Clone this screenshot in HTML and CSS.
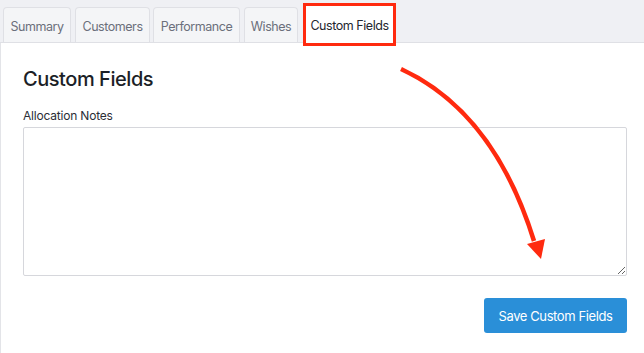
FILE: index.html
```html
<!DOCTYPE html>
<html lang="en">
<head>
    <meta charset="UTF-8">
    <meta name="viewport" content="width=device-width, initial-scale=1.0">
    <title>Custom Fields</title>
    <link rel="stylesheet" href="styles.css">
</head>
<body>
    <div class="tab-bar">
        <div class="tab tab-summary">Summary</div>
        <div class="tab tab-customers">Customers</div>
        <div class="tab tab-performance">Performance</div>
        <div class="tab tab-wishes">Wishes</div>
        <div class="tab active">Custom Fields</div>
    </div>

    <div class="panel">
        <h2>Custom Fields</h2>
        <label class="field-label" for="notes">Allocation Notes</label>
        <textarea id="notes" class="notes"></textarea>
        <div class="actions">
            <button class="save-btn">Save Custom Fields</button>
        </div>
    </div>

    <!-- annotation arrow -->
    <svg class="arrow" width="644" height="353" viewBox="0 0 644 353">
        <path d="M401 69 Q494 112 534 241" fill="none" stroke="#ff2a0f" stroke-width="4.5"/>
        <polygon points="527,244 545,239 541,259" fill="#ff2a0f"/>
    </svg>
</body>
</html>
```

FILE: styles.css
```css
body {
    margin: 0;
    background-color: white;
    font-family: Inter, "Noto Sans", sans-serif;
    color: #1f2430;
    position: relative;
    height: 353px;
    overflow: hidden;
}

.tab-bar {
    display: flex;
    align-items: flex-end;
    gap: 4px;
    height: 43px;
    padding-left: 3px;
    background-color: #eff0f4;
    border-bottom: 1px solid #dfe0e5;
    box-sizing: border-box;
}

.tab {
    height: 35px;
    box-sizing: border-box;
    padding-top: 2px;
    display: flex;
    align-items: center;
    justify-content: center;
    font-size: 12.5px;
    letter-spacing: -0.45px;
    white-space: nowrap;
    color: #6b6f7b;
    background-color: #f4f5f7;
    border: 1px solid #dfe0e5;
    border-bottom: none;
    border-radius: 4px 4px 0 0;
}

.tab-summary { width: 68px; }
.tab-customers { width: 75px; margin-right: -1px; }
.tab-performance { width: 87px; }
.tab-wishes { width: 54px; }

.tab.active {
    width: 87px;
    margin-left: 4px;
    height: 37px;
    margin-bottom: -1px;
    color: #24262e;
    background-color: white;
    border: none;
    border-radius: 0;
    outline: 3px solid #ff2a0f;
}

.panel {
    border-left: 1px solid #e3e4e8;
    padding: 0 17px 0 22px;
    height: 310px;
}

h2 {
    margin: 0;
    padding-top: 24px;
    font-size: 20px;
    font-weight: 500;
    line-height: 24px;
    letter-spacing: -0.45px;
    color: #1c1f27;
}

.field-label {
    display: block;
    margin-top: 17px;
    font-size: 12px;
    line-height: 16px;
    letter-spacing: -0.2px;
    color: #2b2e36;
}

.notes {
    display: block;
    margin-top: 3px;
    width: 100%;
    height: 149px;
    box-sizing: border-box;
    border: 1px solid #d6d7dc;
    border-radius: 2px;
    resize: vertical;
}

.actions {
    display: flex;
    justify-content: flex-end;
    margin-top: 22px;
}

.save-btn {
    width: 143px;
    height: 35px;
    padding: 0;
    font-family: Inter, "Noto Sans", sans-serif;
    font-size: 13px;
    letter-spacing: -0.4px;
    color: white;
    background-color: #2a8fd8;
    border: none;
    border-radius: 3px;
}

.arrow {
    position: absolute;
    top: 0;
    left: 0;
    pointer-events: none;
}
```
